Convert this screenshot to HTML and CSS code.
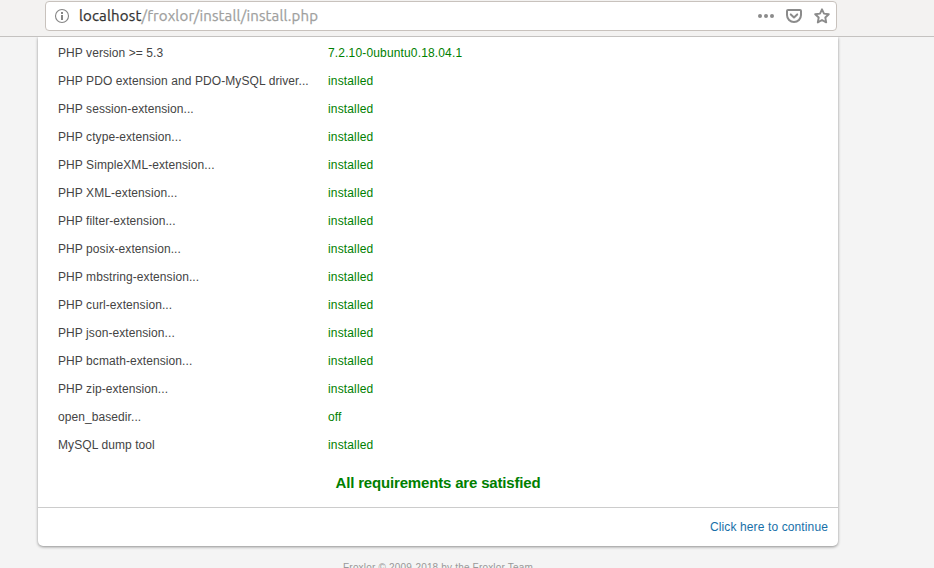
FILE: index.html
```
<!DOCTYPE html>
<html lang="en">
<head>
<meta charset="utf-8">
<title>Froxlor installation</title>
<link rel="stylesheet" href="styles.css">
</head>
<body>
<header class="toolbar">
  <div class="urlbar">
    <svg class="info" width="16" height="16" viewBox="0 0 16 16"><circle cx="8" cy="8" r="6.500" fill="none" stroke="#858585" stroke-width="1.100"/><path d="M7 4h2v2H7zM7 7h2v5H7z" fill="#858585"/></svg>
    <div class="url"><span class="host">localhost</span><span class="path">/froxlor/install/install.php</span></div>
    <svg class="dots" width="18" height="16" viewBox="0 0 18 16" fill="#8b8b8b"><circle cx="3" cy="8" r="2"/><circle cx="9" cy="8" r="2"/><circle cx="15" cy="8" r="2"/></svg>
    <svg class="pocket" width="16" height="16" viewBox="0 0 16 16" fill="none" stroke="#8b8b8b" stroke-width="2" stroke-linecap="round" stroke-linejoin="round"><path d="M2 2h12a1 1 0 0 1 1 1v4a7 7 0 0 1-14 0V3a1 1 0 0 1 1-1z"/><path d="M4.800 6.400 8 9.400l3.200-3"/></svg>
    <svg class="star" width="16" height="16" viewBox="0 0 16 16" fill="none" stroke="#8b8b8b" stroke-width="1.900" stroke-linejoin="round"><path d="M8 1.300l2 4.300 4.800.6-3.500 3.300.9 4.900L8 12l-4.200 2.400.9-4.900L1.200 6.200l4.800-.6z"/></svg>
  </div>
</header>
<main class="card">
  <dl class="checks">
    <dt>PHP version &gt;= 5.3</dt><dd>7.2.10-0ubuntu0.18.04.1</dd>
    <dt>PHP PDO extension and PDO-MySQL driver...</dt><dd>installed</dd>
    <dt>PHP session-extension...</dt><dd>installed</dd>
    <dt>PHP ctype-extension...</dt><dd>installed</dd>
    <dt>PHP SimpleXML-extension...</dt><dd>installed</dd>
    <dt>PHP XML-extension...</dt><dd>installed</dd>
    <dt>PHP filter-extension...</dt><dd>installed</dd>
    <dt>PHP posix-extension...</dt><dd>installed</dd>
    <dt>PHP mbstring-extension...</dt><dd>installed</dd>
    <dt>PHP curl-extension...</dt><dd>installed</dd>
    <dt>PHP json-extension...</dt><dd>installed</dd>
    <dt>PHP bcmath-extension...</dt><dd>installed</dd>
    <dt>PHP zip-extension...</dt><dd>installed</dd>
    <dt>open_basedir...</dt><dd>off</dd>
    <dt>MySQL dump tool</dt><dd>installed</dd>
  </dl>
  <p class="result">All requirements are satisfied</p>
  <div class="actions"><a href="#">Click here to continue</a></div>
</main>
<footer class="footer">Froxlor © 2009-2018 by the Froxlor Team</footer>
</body>
</html>
```
FILE: styles.css
```
* { box-sizing: border-box; }
html, body { height: 568px; overflow: hidden; }
body {
  margin: 0;
  background: #f4f4f4;
  color: #444;
  font: 12px/18px "Liberation Sans", Arial, sans-serif;
}
.toolbar {
  height: 37px;
  padding: 1px 0 0 45px;
  background: #f3f2f1;
  border-bottom: 1px solid #c4c2c0;
}
.urlbar {
  display: flex;
  align-items: center;
  width: 792px;
  height: 30px;
  padding: 0 6px 0 8px;
  background: #fff;
  border: 1px solid #c8c2bd;
  border-radius: 4px;
}
.url {
  flex: 1;
  margin-left: 9px;
  font: 15px/20px Ubuntu, "Noto Sans", sans-serif;
  letter-spacing: .16px;
  white-space: nowrap;
}
.host { color: #333; -webkit-text-stroke: .25px #333; }
.path { color: #a09f9e; -webkit-text-stroke: .25px #a09f9e; }
.pocket { margin-left: 11px; }
.star { margin-left: 12px; }
.card {
  width: 800px;
  height: 509px;
  margin-left: 38px;
  padding-top: 2px;
  background: #fff;
  border-radius: 0 0 5px 5px;
  box-shadow: 0 1px 3px rgba(0, 0, 0, .42);
  clip-path: inset(0 -8px -8px);
}
.checks {
  display: grid;
  grid-template-columns: 270px 1fr;
  grid-auto-rows: 28px;
  margin: 0;
  padding-left: 20px;
  line-height: 28px;
  letter-spacing: .08px;
}
.checks dd { margin: 0; color: #008000; letter-spacing: .15px; }
.result {
  height: 48px;
  margin: 0;
  padding-top: 13px;
  color: #008000;
  font-size: 15px;
  font-weight: bold;
  line-height: 22px;
  letter-spacing: -.17px;
  text-align: center;
}
.actions {
  height: 39px;
  padding: 10px 10px 0;
  border-top: 1px solid #ccc;
  letter-spacing: .12px;
  text-align: right;
}
.actions a { color: #176fa8; text-decoration: none; }
.footer {
  width: 800px;
  margin: 14px 0 0 38px;
  color: #999;
  font-size: 10px;
  line-height: 16px;
  letter-spacing: .18px;
  text-align: center;
}
```
